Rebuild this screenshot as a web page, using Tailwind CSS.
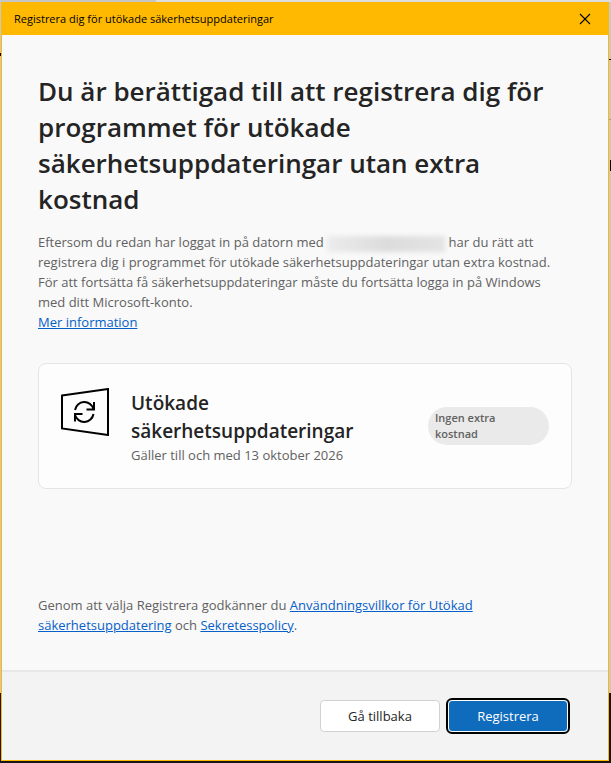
<!DOCTYPE html>
<html lang="sv">
<head>
  <meta charset="UTF-8" />
  <meta name="viewport" content="width=device-width, initial-scale=1.0" />
  <title>Registrera dig för utökade säkerhetsuppdateringar</title>
  <script src="https://cdn.jsdelivr.net/npm/@tailwindcss/browser@4"></script>
</head>
<body class="relative min-h-screen flex flex-col bg-[#c8c8c8] pt-[2px] pb-[2px] pl-px pr-[2px] font-['Open_Sans','Noto_Sans',sans-serif]">

  <!-- Desktop behind the window -->
  <div class="absolute inset-x-0 bottom-0 h-[70px] bg-[#16161a]"></div>
  <div class="absolute inset-x-0 top-0 h-[2px] bg-[#dedede]"></div>
  <div class="absolute left-0 top-0 h-[2px] w-[156px] bg-[#c6c6c6]"></div>
  <div class="absolute left-0 top-[53px] h-[3px] w-px bg-black"></div>
  <div class="absolute right-0 top-[59px] h-px w-[2px] bg-black"></div>
  <div class="absolute right-0 top-[119px] h-px w-[2px] bg-[#a0a0a0]"></div>
  <div class="absolute right-0 top-[160px] h-[11px] w-px bg-black"></div>

  <!-- Window -->
  <div class="relative grow flex flex-col border border-[#ffb900] bg-[#f9f9f9]">
    <header class="h-8 flex items-center justify-between bg-[#ffb900] pl-3 pr-[15px]">
      <h2 class="text-[11px] text-black">Registrera dig för utökade säkerhetsuppdateringar</h2>
      <button type="button" aria-label="Stäng" class="p-0.5">
        <svg class="size-3" viewBox="0 0 12 12" fill="none" stroke="#000" stroke-width="1.1"><path d="M1 1l10 10M11 1L1 11" /></svg>
      </button>
    </header>

    <main class="grow flex flex-col px-9 pt-[38px] pb-[35px] text-[13px] leading-5 text-[#616161]">
      <h1 class="text-[26px] leading-9 font-semibold text-[#242424]">Du är berättigad till att registrera dig för programmet för utökade säkerhetsuppdateringar utan extra kostnad</h1>
      <p class="mt-[15px] pr-3">
        Eftersom du redan har loggat in på datorn med
        <span class="inline-block align-middle h-4 w-[118px] bg-gradient-to-r from-[#ececec] via-[#dcdcdc] to-[#e4e4e4] blur-[2px]"></span>
        har du rätt att registrera dig i programmet för utökade säkerhetsuppdateringar utan extra kostnad. För att fortsätta få säkerhetsuppdateringar måste du fortsätta logga in på Windows med ditt Microsoft-konto.
      </p>
      <a href="#" class="self-start text-[#0560c8] underline">Mer information</a>

      <section class="mt-[31px] min-h-[126px] flex items-center rounded-lg border border-[#e5e5e5] bg-[#fdfdfd] px-[22px]">
        <svg class="size-12 shrink-0 self-start mt-6" viewBox="0 0 48 48" fill="none" stroke="#000" stroke-width="2">
          <path d="M1 7.5L47 1v46L1 40.500z" />
          <path d="M14 22A9.500 9.500 0 0 1 32.500 21M33 14v7.500H25.500" />
          <path d="M32.500 26A9.500 9.500 0 0 1 14 27M14 33.500V26h7.500" />
        </svg>
        <div class="grow pl-[22px] pt-0.5">
          <h2 class="text-[19px] leading-7 font-semibold text-[#242424]">Utökade<br />säkerhetsuppdateringar</h2>
          <p>Gäller till och med 13 oktober 2026</p>
        </div>
        <span class="w-[121px] shrink-0 rounded-full bg-[#eaeaea] pl-[7px] pr-9 py-[3px] text-[11px] leading-4 font-semibold text-[#616161]">Ingen extra kostnad</span>
      </section>

      <p class="mt-auto">
        Genom att välja Registrera godkänner du <a href="#" class="text-[#0560c8] underline">Användningsvillkor för Utökad säkerhetsuppdatering</a> och <a href="#" class="text-[#0560c8] underline">Sekretesspolicy</a>.
      </p>
    </main>

    <footer class="flex justify-end gap-2 border-t-2 border-[#e8e8e8] bg-[#f3f3f3] px-10 py-7 text-[13px]">
      <button type="button" class="h-8 w-[120px] rounded border border-[#d1d1d1] bg-white pt-0.5 text-[#242424]">Gå tillbaka</button>
      <button type="button" class="h-8 w-[120px] rounded border border-white bg-[#0f6cbd] pt-0.5 text-white outline-2 outline-black">Registrera</button>
    </footer>
  </div>
</body>
</html>
